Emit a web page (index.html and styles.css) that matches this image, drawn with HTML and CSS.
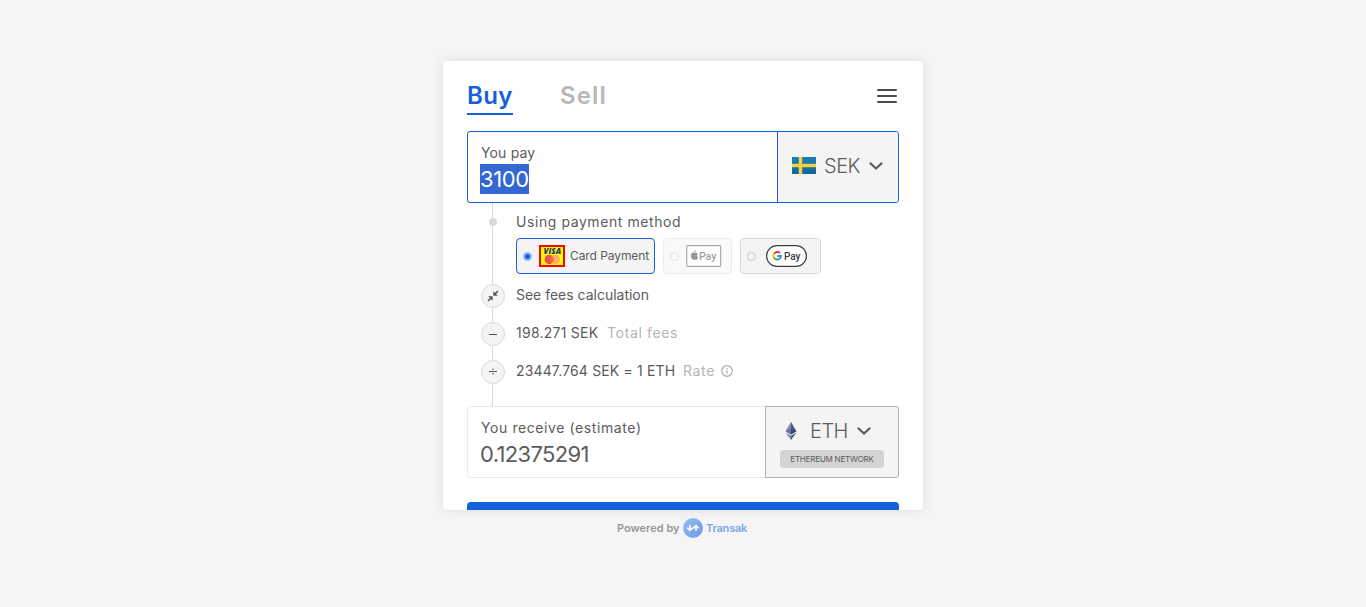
FILE: index.html
```
<!DOCTYPE html>
<html lang="en">
<head>
<meta charset="utf-8">
<title>Transak</title>
<link rel="stylesheet" href="styles.css">
</head>
<body>
<main class="card">
  <header class="head">
    <nav class="tabs"><a class="tab active"><span class="t-buy">Buy</span></a><a class="tab"><span class="t-sell">Sell</span></a></nav>
    <div class="menu"><i></i><i></i><i></i></div>
  </header>

  <section class="field pay">
    <div class="amount">
      <label class="label l-pay">You pay</label>
      <div class="value"><span class="selected">3100</span></div>
    </div>
    <div class="currency sek">
      <svg width="24" height="17" viewBox="0 0 24 17"><defs><linearGradient id="sea" x2="0" y2="1"><stop stop-color="#1a80bd"/><stop offset="1" stop-color="#0f659f"/></linearGradient></defs><path fill="url(#sea)" d="M0 0h24v17H0z"/><path d="M6.500 0h4v17h-4zM0 6.500h24v4H0z" fill="#7f9d62"/><path d="M7 0h3v17H7zM0 7h24v3H0z" fill="#ffce3d"/></svg>
      <span class="code">SEK</span>
      <svg class="chev" width="16" height="10" viewBox="0 0 16 10"><path d="M1.800 1.800 8 7.600l6.200-5.800" fill="none" stroke="#5c5c5c" stroke-width="2.200"/></svg>
    </div>
  </section>

  <section class="steps">
    <div class="step method">
      <div class="mark"><span class="dot"></span></div>
      <div class="body">
        <div class="using">Using payment method</div>
        <div class="options">
          <div class="option chosen">
            <span class="radio on"></span>
            <svg class="visa" width="26" height="22" viewBox="0 0 26 22"><path fill="#ff0" stroke="#f00" stroke-width="2" d="M1 1h24v20H1z"/><text x="4.600" y="9" textLength="17.500" lengthAdjust="spacingAndGlyphs" class="visa-word">VISA</text><circle cx="10.200" cy="14.500" r="4.700" fill="#eb504c"/><circle cx="16.300" cy="14.500" r="4.700" fill="#fbb05b"/><path d="M13.250 10.900a4.700 4.700 0 0 1 0 7.200 4.700 4.700 0 0 1 0-7.200z" fill="#ed7350"/></svg>
            <span class="card-text">Card Payment</span>
          </div>
          <div class="option apple">
            <span class="radio"></span>
            <svg width="36" height="22" viewBox="0 0 36 22"><rect x=".7" y=".7" width="34" height="20.600" rx="1" fill="#fff" stroke="#555" stroke-width="1.200"/><path fill="#333" d="M8.600 7.800c-1.500-.8-3.700-.1-3.700 2.700 0 2.200 1.300 4.300 2.500 4.300.5 0 .8-.3 1.300-.3s.8.300 1.400.3c.9 0 1.700-1.300 2-2.400-1.400-.6-1.500-2.700-.2-3.500-.8-1.200-2-1.500-3.300-1.100z"/><path fill="#333" d="M8.400 7.300c0-1.200.7-1.900 1.700-2.100.1 1.200-.6 2.100-1.700 2.100z"/><text x="12.900" y="14.900" textLength="17.500" lengthAdjust="spacingAndGlyphs" class="pay-word gray">Pay</text></svg>
          </div>
          <div class="option google">
            <span class="radio"></span>
            <svg width="41" height="22" viewBox="0 0 41 22"><rect x=".6" y=".6" width="39.800" height="20.800" rx="10.400" fill="#fff" stroke="#3c4043" stroke-width="1.200"/><g fill="none" stroke-width="1.900"><path d="M8 8.900a3.800 3.800 0 0 1 5.900-.9" stroke="#ea4335"/><path d="M8 8.800a3.800 3.800 0 0 0 0 4" stroke="#fbbc04"/><path d="M7.900 12.600a3.800 3.800 0 0 0 5.600 1.200" stroke="#34a853"/><path d="M11.200 11h3.700a3.700 3.700 0 0 1-1.400 2.900" stroke="#4285f4"/></g><text x="18" y="15" textLength="16.500" lengthAdjust="spacingAndGlyphs" class="pay-word">Pay</text></svg>
          </div>
        </div>
      </div>
    </div>
    <div class="step">
      <div class="mark"><span class="disc"><svg width="12" height="12" viewBox="0 0 12 12"><g fill="#555" stroke="#555"><path d="M1 11l3-3M11 1 8 4" stroke-width="1.600"/><path stroke="none" d="M1.200 6.300h4.500v4.500L4.200 9.300 3 7.900zM10.800 5.700H6.300V1.200l1.500 1.500L9 4.100z"/></g></svg></span></div>
      <div class="body"><span class="s-fees">See fees calculation</span></div>
    </div>
    <div class="step">
      <div class="mark"><span class="disc"><svg width="12" height="12" viewBox="0 0 12 12"><path d="M2 6.500h8" stroke="#555"/></svg></span></div>
      <div class="body"><span class="s-total">198.271 SEK</span><span class="hint h-total">Total fees</span></div>
    </div>
    <div class="step">
      <div class="mark"><span class="disc"><svg width="12" height="12" viewBox="0 0 12 12"><path d="M2 5.500h8" stroke="#555"/><circle cx="6" cy="3.200" r=".8" fill="#555"/><circle cx="6" cy="7.800" r=".8" fill="#555"/></svg></span></div>
      <div class="body"><span class="s-rate">23447.764 SEK = 1 ETH</span><span class="hint h-rate">Rate</span><svg class="info" width="12" height="12" viewBox="0 0 12 12"><circle cx="6" cy="6" r="5.300" fill="none" stroke="#aaa" stroke-width="1.200"/><path d="M6 5.300v3.400M6 3v1.200" stroke="#aaa" stroke-width="1.200"/></svg></div>
    </div>
  </section>

  <section class="field receive">
    <div class="amount">
      <label class="label l-receive">You receive (estimate)</label>
      <div class="value"><span class="v-receive">0.12375291</span></div>
    </div>
    <div class="currency eth">
      <div class="coin">
        <svg width="12" height="18" viewBox="0 0 12 18"><path d="M6 0 .5 9.200 6 12.400z" fill="#8188b3"/><path d="M6 0v12.400l5.500-3.200z" fill="#535a8b"/><path d="M.5 9.200 6 6.700v5.700z" fill="#686f9f"/><path d="M6 6.700v5.700l5.500-3.200z" fill="#3c4373"/><path d="M.5 10.500 6 13.700V18z" fill="#8188b3"/><path d="M11.500 10.500 6 13.700V18z" fill="#535a8b"/></svg>
        <span class="code">ETH</span>
        <svg class="chev" width="16" height="10" viewBox="0 0 16 10"><path d="M1.800 1.800 8 7.600l6.200-5.800" fill="none" stroke="#5c5c5c" stroke-width="2.200"/></svg>
      </div>
      <div class="network"><span>ETHEREUM NETWORK</span></div>
    </div>
  </section>
  <div class="submit"></div>
</main>
<footer class="powered">
  <span class="by">Powered by</span>
  <svg width="20" height="20" viewBox="0 0 20 20"><defs><linearGradient id="brand" x2="1" y2="1"><stop stop-color="#8fc2f5"/><stop offset="1" stop-color="#7096e2"/></linearGradient></defs><circle cx="10" cy="10" r="10" fill="url(#brand)"/><path d="M4.200 9.800 6.900 12.500l2.700-2.700M6.900 12V7M10.300 10.200 13 7.500l2.700 2.700M13 8v5M9.300 10.100h1.300" fill="none" stroke="#fff" stroke-width="1.500"/></svg>
  <span class="brand">Transak</span>
</footer>
</body>
</html>
```
FILE: styles.css
```
* { box-sizing: border-box; }
body { margin: 0; padding-top: 61px; height: 607px; background: #f5f5f5; color: #5c5c5c; font-family: Inter, "Liberation Sans", sans-serif; font-size: 14px; overflow: hidden; }
svg { display: block; flex: none; }
.card { width: 480px; height: 449px; margin: 0 auto; padding: 16px 24px 0; background: #fff; border-radius: 4px; overflow: hidden; box-shadow: 0 0 12px rgba(0,0,0,.1); }
.head { display: flex; justify-content: space-between; height: 54px; }
.tabs { display: flex; gap: 47px; }
.tab { height: 38px; font-size: 24px; line-height: 37px; font-weight: 600; color: #b8b8b8; white-space: nowrap; }
.active { width: 46px; color: #1461db; border-bottom: 2px solid #1461db; }
.t-buy { letter-spacing: .4px; }
.t-sell { letter-spacing: 1.1px; }
.menu { width: 20px; margin: 12px 2px 0 0; display: flex; flex-direction: column; gap: 4px; }
.menu i { height: 2px; background: #484b57; border-radius: 1px; }
.field { display: flex; height: 72px; border: 1px solid #ebebeb; border-radius: 3px; }
.pay { border-color: #1461db; }
.amount { flex: 1; padding: 11px 0 0 12px; }
.label { display: block; height: 21px; line-height: 20px; padding-left: 1px; white-space: nowrap; }
.l-pay { letter-spacing: .15px; }
.l-receive { letter-spacing: .59px; }
.value { font-size: 22px; line-height: 30px; }
.selected { display: inline-block; width: 49px; height: 30px; background: #3367d1; color: #fff; letter-spacing: -.4px; }
.v-receive { letter-spacing: -.65px; }
.currency { background: #f4f4f4; }
.code { font-size: 20px; font-weight: 300; line-height: 28px; letter-spacing: -.5px; }
.sek { width: 121px; display: flex; align-items: center; padding: 0 0 3px 14px; border-left: 1px solid #1461db; border-radius: 0 2px 2px 0; }
.sek .code { width: 37px; margin: 0 7px 0 8px; }
.steps { height: 203px; display: flex; flex-direction: column; background: linear-gradient(#d9d9d9,#d9d9d9) 25px 0 / 1px 100% no-repeat; }
.step { display: flex; height: 38px; flex: none; }
.method { height: 74px; }
.mark { width: 49px; flex: none; padding: 7px 0 0 14px; }
.dot { display: block; width: 8px; height: 8px; border-radius: 50%; background: #d9d9d9; margin: 8px 0 0 8px; }
.disc { display: flex; align-items: center; justify-content: center; width: 24px; height: 24px; border: 1px solid #d9d9d9; border-radius: 50%; background: #f4f4f4; }
.body { display: flex; align-items: center; height: 35px; white-space: nowrap; }
.method .body { display: block; height: 74px; padding-top: 9px; }
.using { line-height: 20px; letter-spacing: .57px; }
.s-fees { letter-spacing: -.01px; }
.s-total { letter-spacing: .25px; width: 83px; margin-right: 8px; }
.s-rate { letter-spacing: .15px; width: 159px; margin-right: 8px; }
.hint { color: #b5b5b5; letter-spacing: .65px; }
.h-rate { width: 38px; }
.mark svg { overflow: visible; }
.options { display: flex; gap: 8px; margin-top: 6px; }
.option { height: 36px; display: flex; align-items: center; background: #f4f4f4; border: 1px solid #d9d9d9; border-radius: 4px; padding-left: 6px; }
.chosen { width: 139px; border-color: #1461db; }
.apple { width: 69px; opacity: .5; }
.google { width: 81px; }
.radio { width: 9px; height: 9px; border: 1px solid #c6c6c6; border-radius: 50%; flex: none; margin-right: 7px; }
.on { background: #1461db; border: 2px solid #91b9f5; }
.google .radio { margin-right: 10px; }
.card-text { font-size: 12px; line-height: 16px; margin: 0 0 0 5px; letter-spacing: -.08px; }
.visa-word { font: italic 800 8.500px "Open Sans", sans-serif; fill: #263878; }
.pay-word { font: 500 11.500px Roboto, sans-serif; fill: #3c4043; }
.gray { fill: #444; }
.info { margin-top: 1px; }
.eth { width: 134px; margin: -1px; border: 1px solid #b0b0b0; border-radius: 0 3px 3px 0; padding: 10px 14px; }
.coin { display: flex; align-items: center; height: 28px; padding-left: 5px; }
.coin .code { width: 38px; margin: 0 8px 0 13px; }
.network { width: 104px; height: 18px; margin-top: 5px; background: #d3d3d3; border-radius: 4px; text-align: center; font-size: 8px; line-height: 18px; letter-spacing: -.2px; white-space: nowrap; }
.submit { height: 48px; margin-top: 24px; border-radius: 4px; background: #1461db; }
.powered { display: flex; align-items: center; height: 20px; margin: 8px 0 0 617px; font-size: 11px; font-weight: 600; white-space: nowrap; }
.by { width: 66px; color: #999; }
.brand { margin-left: 3px; color: #7ca4e6; letter-spacing: -.2px; }
```
